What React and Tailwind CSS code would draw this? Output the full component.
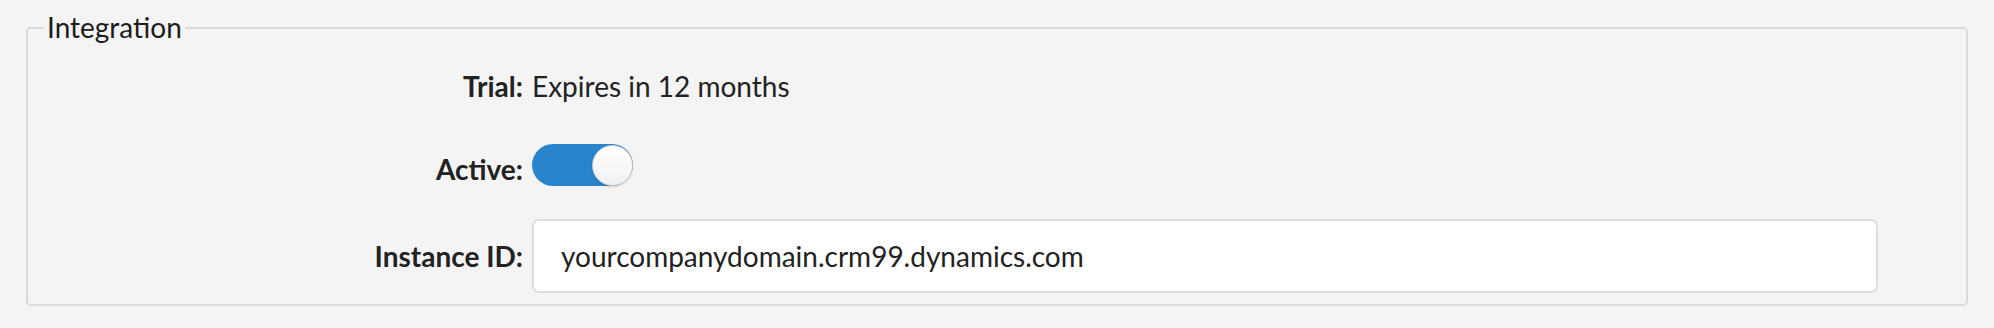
export default function App() {
  return (
    <div className="min-h-[328px] w-full bg-[#f4f4f4] px-[26px] pt-[10px] text-[#222] font-['Lato','Liberation_Sans',sans-serif]">
      <fieldset className="rounded-[5px] border-2 border-[#dadada] pr-[88px] pb-[11px]">
        <legend className="ml-[16px] px-[3px] text-[28px] leading-[35px] text-[#1c1c1c]">Integration</legend>
        <div className="mt-[24px] grid grid-cols-[495px_1fr] gap-x-[9px]">
          <div className="text-right text-[28px] font-bold leading-[34px]">Trial:</div>
          <div className="text-[28px] leading-[34px]">Expires in 12 months</div>

          <div className="mt-[41px] flex items-end justify-end">
            <span className="text-right text-[28px] font-bold leading-[34px]">Active:</span>
          </div>
          <div className="mt-[41px] flex items-end">
            <div className="relative h-[42px] w-[101px] rounded-full bg-[#2a84cc]">
              <div className="absolute right-0 top-[0.5px] h-[41px] w-[41px] rounded-full border border-[#cfcfcf] bg-gradient-to-b from-white to-[#f1f1f1] shadow-[0_1px_2px_rgba(0,0,0,0.15)]"></div>
            </div>
          </div>

          <div className="mt-[33px] flex items-center justify-end">
            <span className="text-right text-[28px] font-bold leading-[34px]">Instance ID:</span>
          </div>
          <div className="mt-[33px]">
            <div className="flex h-[74px] items-center rounded-[7px] border-2 border-[#dedede] bg-white pl-[27px] text-[28px] leading-[34px]">
              yourcompanydomain.crm99.dynamics.com
            </div>
          </div>
        </div>
      </fieldset>
    </div>
  );
}
